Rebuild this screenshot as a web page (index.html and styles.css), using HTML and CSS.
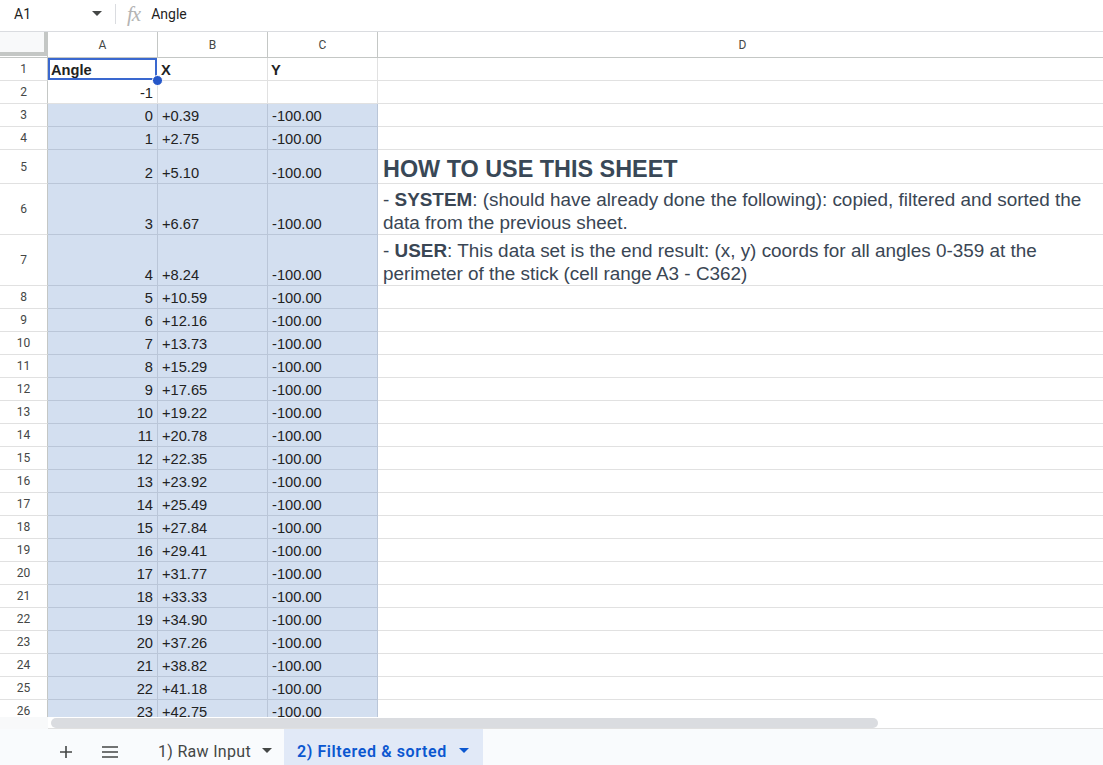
FILE: index.html
```html
<!DOCTYPE html>
<html>
<head>
<meta charset="utf-8">
<link rel="stylesheet" href="styles.css">
</head>
<body>
<div class="formula-bar">
  <div class="namebox">
    <span class="name">A1</span>
    <svg class="caret" width="10" height="6" viewBox="0 0 10 6"><path d="M0 0h10L5 5z" fill="#444746"/></svg>
  </div>
  <div class="sep"></div>
  <span class="fx">fx</span>
  <span class="formula">Angle</span>
</div>

<div class="sheet">
  <div class="corner"><div class="corner-box"></div></div>
  <div class="ch">A</div><div class="ch">B</div><div class="ch">C</div><div class="ch">D</div>

  <div class="rh">1</div><div class="c b a1">Angle<div class="handle"></div></div><div class="c b">X</div><div class="c b">Y</div><div class="c"></div>
  <div class="rh">2</div><div class="c r">-1</div><div class="c"></div><div class="c"></div><div class="c"></div>
  <div class="rh">3</div><div class="c r s">0</div><div class="c s">+0.39</div><div class="c s">-100.00</div><div class="c"></div>
  <div class="rh">4</div><div class="c r s">1</div><div class="c s">+2.75</div><div class="c s">-100.00</div><div class="c"></div>
  <div class="rh">5</div><div class="c r s">2</div><div class="c s">+5.10</div><div class="c s">-100.00</div><div class="c d h">HOW TO USE THIS SHEET</div>
  <div class="rh">6</div><div class="c r s">3</div><div class="c s">+6.67</div><div class="c s">-100.00</div><div class="c d t"><span>- <b>SYSTEM</b>: (should have already done the following): copied, filtered and sorted the<br>data from the previous sheet.</span></div>
  <div class="rh">7</div><div class="c r s">4</div><div class="c s">+8.24</div><div class="c s">-100.00</div><div class="c d t"><span>- <b>USER</b>: This data set is the end result: (x, y) coords for all angles 0-359 at the<br>perimeter of the stick (cell range A3 - C362)</span></div>
  <div class="rh">8</div><div class="c r s">5</div><div class="c s">+10.59</div><div class="c s">-100.00</div><div class="c"></div>
  <div class="rh">9</div><div class="c r s">6</div><div class="c s">+12.16</div><div class="c s">-100.00</div><div class="c"></div>
  <div class="rh">10</div><div class="c r s">7</div><div class="c s">+13.73</div><div class="c s">-100.00</div><div class="c"></div>
  <div class="rh">11</div><div class="c r s">8</div><div class="c s">+15.29</div><div class="c s">-100.00</div><div class="c"></div>
  <div class="rh">12</div><div class="c r s">9</div><div class="c s">+17.65</div><div class="c s">-100.00</div><div class="c"></div>
  <div class="rh">13</div><div class="c r s">10</div><div class="c s">+19.22</div><div class="c s">-100.00</div><div class="c"></div>
  <div class="rh">14</div><div class="c r s">11</div><div class="c s">+20.78</div><div class="c s">-100.00</div><div class="c"></div>
  <div class="rh">15</div><div class="c r s">12</div><div class="c s">+22.35</div><div class="c s">-100.00</div><div class="c"></div>
  <div class="rh">16</div><div class="c r s">13</div><div class="c s">+23.92</div><div class="c s">-100.00</div><div class="c"></div>
  <div class="rh">17</div><div class="c r s">14</div><div class="c s">+25.49</div><div class="c s">-100.00</div><div class="c"></div>
  <div class="rh">18</div><div class="c r s">15</div><div class="c s">+27.84</div><div class="c s">-100.00</div><div class="c"></div>
  <div class="rh">19</div><div class="c r s">16</div><div class="c s">+29.41</div><div class="c s">-100.00</div><div class="c"></div>
  <div class="rh">20</div><div class="c r s">17</div><div class="c s">+31.77</div><div class="c s">-100.00</div><div class="c"></div>
  <div class="rh">21</div><div class="c r s">18</div><div class="c s">+33.33</div><div class="c s">-100.00</div><div class="c"></div>
  <div class="rh">22</div><div class="c r s">19</div><div class="c s">+34.90</div><div class="c s">-100.00</div><div class="c"></div>
  <div class="rh">23</div><div class="c r s">20</div><div class="c s">+37.26</div><div class="c s">-100.00</div><div class="c"></div>
  <div class="rh">24</div><div class="c r s">21</div><div class="c s">+38.82</div><div class="c s">-100.00</div><div class="c"></div>
  <div class="rh">25</div><div class="c r s">22</div><div class="c s">+41.18</div><div class="c s">-100.00</div><div class="c"></div>
  <div class="rh">26</div><div class="c r s">23</div><div class="c s">+42.75</div><div class="c s">-100.00</div><div class="c"></div>
</div>

<div class="hscroll">
  <div class="hscroll-gutter"></div>
  <div class="thumb"></div>
</div>

<div class="tabbar">
  <svg class="plus" width="14" height="14" viewBox="0 0 14 14"><path d="M7 1v12M1 7h12" stroke="#444746" stroke-width="1.6"/></svg>
  <svg class="menu" width="18" height="12" viewBox="0 0 18 12"><path d="M1 1h16M1 6h16M1 11h16" stroke="#444746" stroke-width="1.6"/></svg>
  <div class="tab">
    <span>1) Raw Input</span>
    <svg width="10" height="6" viewBox="0 0 10 6"><path d="M0 0h10L5 5z" fill="#444746"/></svg>
  </div>
  <div class="tab active">
    <span>2) Filtered &amp; sorted</span>
    <svg width="10" height="6" viewBox="0 0 10 6"><path d="M0 0h10L5 5z" fill="#0b57d0"/></svg>
  </div>
</div>
</body>
</html>
```

FILE: styles.css
```css
* { box-sizing: border-box; }
html, body {
  margin: 0;
  padding: 0;
  width: 1103px;
  height: 765px;
  overflow: hidden;
  background: #fff;
  font-family: "Liberation Sans", Arial, sans-serif;
  color: #222;
}

/* formula bar */
.formula-bar {
  height: 32px;
  padding-bottom: 3px;
  border-bottom: 1px solid #dadce0;
  display: flex;
  align-items: center;
  font-family: Roboto, "Liberation Sans", sans-serif;
  font-size: 14px;
  color: #1f1f1f;
}
.namebox {
  width: 115px;
  display: flex;
  align-items: center;
  padding-left: 14px;
}
.name { flex: 1; }
.caret { margin-right: 13px; }
.sep {
  width: 1px;
  height: 20px;
  background: #dadce0;
}
.fx {
  margin-left: 11px;
  font-family: "Liberation Serif", serif;
  font-style: italic;
  font-size: 21px;
  line-height: 20px;
  color: #b4b4b4;
  letter-spacing: -1px;
}
.formula { margin-left: 11px; }

/* grid */
.sheet {
  height: 685px;
  width: 1103px;
  overflow: hidden;
  display: grid;
  grid-template-columns: 48px 110px 110px 110px 730px;
  grid-template-rows: 26px repeat(4, 23px) 34px 51px 51px repeat(19, 23px);
}
.corner {
  border-right: 1px solid #c4c7c5;
  border-bottom: 1px solid #c4c7c5;
}
.corner-box {
  width: 48px;
  height: 24px;
  background: #f8f9fa;
  border-right: 4px solid #c4c7c5;
  border-bottom: 4px solid #c4c7c5;
}
.ch {
  border-right: 1px solid #c4c7c5;
  border-bottom: 1px solid #c4c7c5;
  display: flex;
  align-items: center;
  justify-content: center;
  font-family: Roboto, "Liberation Sans", sans-serif;
  font-size: 12px;
  color: #444746;
  padding-top: 1px;
}
.rh {
  border-right: 1px solid #c4c7c5;
  border-bottom: 1px solid #e1e1e1;
  display: flex;
  align-items: center;
  justify-content: center;
  font-family: Roboto, "Liberation Sans", sans-serif;
  font-size: 12px;
  color: #444746;
}
.c {
  position: relative;
  border-right: 1px solid #e1e1e1;
  border-bottom: 1px solid #e1e1e1;
  display: flex;
  align-items: flex-end;
  padding: 0 3px 1px 4px;
  font-size: 14.67px;
  line-height: 18px;
  white-space: nowrap;
  color: #222;
}
.c.r { justify-content: flex-end; padding-right: 4px; }
.c.b { font-weight: bold; padding-left: 3px; }
.c.s {
  background: #d3dff0;
  border-color: #bac6d8;
}
.a1 {
  box-shadow: inset 0 0 0 2px #3a68cf;
  border-color: transparent;
}
.handle {
  position: absolute;
  right: -6px;
  bottom: -6px;
  width: 11px;
  height: 11px;
  border-radius: 50%;
  background: #2557c9;
  border: 1px solid #fff;
  z-index: 2;
}
.c.d { color: #3a4654; padding-left: 5px; }
.c.h {
  font-size: 23.4px;
  font-weight: bold;
  line-height: 26px;
  padding-bottom: 1px;
  color: #394857;
}
.c.t {
  font-size: 18.9px;
  line-height: 23px;
  padding-bottom: 0;
}

/* horizontal scrollbar */
.hscroll {
  height: 12px;
  display: flex;
  align-items: center;
  border-bottom: 1px solid #e0e0e0;
}
.hscroll-gutter {
  width: 48px;
  height: 12px;
  background: #f8f9fa;
}
.thumb {
  margin-left: 3px;
  width: 827px;
  height: 10px;
  border-radius: 5px;
  background: #dadce0;
}

/* tabs */
.tabbar {
  height: 36px;
  background: #f9fbfd;
  display: flex;
  align-items: stretch;
  font-family: Roboto, "Liberation Sans", sans-serif;
  font-size: 16px;
  color: #444746;
}
.plus { align-self: center; margin-left: 59px; margin-top: 9px; }
.menu { align-self: center; margin-left: 28px; margin-top: 9px; }
.tab {
  display: flex;
  align-items: center;
  gap: 11px;
  padding: 8px 12px 0 14px;
  letter-spacing: 0.3px;
  white-space: nowrap;
  flex-shrink: 0;
}
.tab svg { flex-shrink: 0; }
.tab:first-of-type { margin-left: 25px; }
.tab.active {
  margin-left: 0;
  width: 199px;
  background: #e1e9f7;
  color: #0b57d0;
  font-weight: 600;
  letter-spacing: 0.6px;
  gap: 12px;
  padding-left: 13px;
  padding-right: 0;
}
```
